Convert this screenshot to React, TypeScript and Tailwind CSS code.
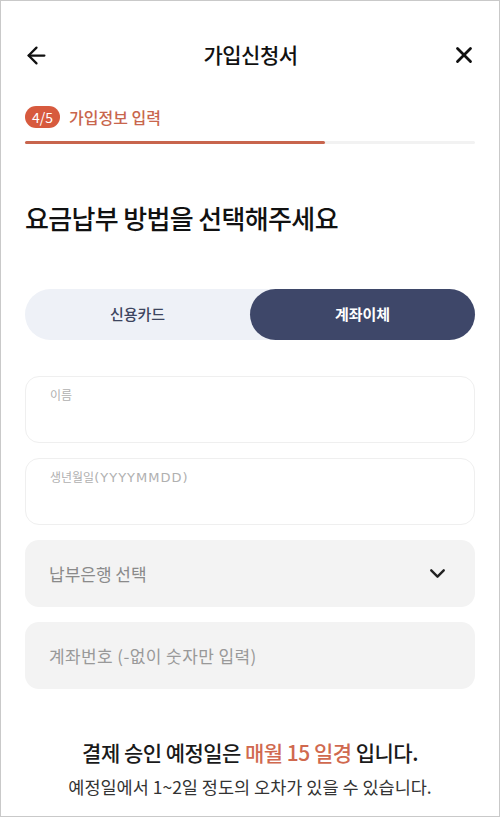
import { ArrowLeft, X, ChevronDown } from "lucide-react"

export default function App() {
  const font = { fontFamily: '"Noto Sans CJK KR", "Noto Sans", sans-serif' }

  return (
    <div className="w-[500px] h-[817px] bg-white border border-[#c9c9c9] overflow-hidden" style={font}>
      {/* Header */}
      <div className="flex items-center justify-between h-[40px] mt-[34px] px-[22px]">
        <ArrowLeft className="h-[27px] w-[27px] text-[#111]" strokeWidth={2} />
        <h1 className="text-[21px] font-medium text-[#111] tracking-tight">가입신청서</h1>
        <X className="h-[26px] w-[26px] text-[#111]" strokeWidth={2.6} />
      </div>

      {/* Step */}
      <div className="px-[24px] mt-[30px]">
        <div className="flex items-center gap-[9px]">
          <span className="inline-flex items-center justify-center h-[22px] px-[7px] rounded-full bg-[#d75a3e] text-white text-[14px] leading-none">
            4/5
          </span>
          <span className="text-[16px] font-medium text-[#c8664d]">가입정보 입력</span>
        </div>
        <div className="mt-[12px] h-[3px] bg-[#f2f2f2] rounded-full">
          <div className="h-full w-[300px] bg-[#c8654d] rounded-full" />
        </div>
      </div>

      {/* Title */}
      <h2 className="px-[24px] mt-[54px] text-[26px] font-medium text-[#111] tracking-tight">
        요금납부 방법을 선택해주세요
      </h2>

      {/* Toggle */}
      <div className="mx-[24px] mt-[52px] flex h-[51px] rounded-full bg-[#eef1f7]">
        <button className="flex-1 text-[15px] font-medium text-[#3d4560]">신용카드</button>
        <button className="flex-1 rounded-full bg-[#3e4769] text-[15px] font-bold text-white">계좌이체</button>
      </div>

      {/* Fields */}
      <div className="mx-[24px] mt-[36px] flex flex-col gap-[15px]">
        <div className="h-[67px] rounded-[14px] border border-[#efefef] px-[24px] pt-[4px]">
          <span className="text-[12px] text-[#b0b0b0]">이름</span>
        </div>
        <div className="h-[67px] rounded-[14px] border border-[#efefef] px-[24px] pt-[4px]">
          <span className="text-[12px] text-[#b0b0b0]">
            생년월일
            <span className="text-[13px] tracking-[1px]" style={{ fontFamily: '"DejaVu Sans", sans-serif' }}>
              (YYYYMMDD)
            </span>
          </span>
        </div>
        <div className="h-[67px] rounded-[14px] bg-[#f3f3f3] pl-[24px] pr-[25px] flex items-center justify-between">
          <span className="text-[17px] text-[#8a8a8a]">납부은행 선택</span>
          <ChevronDown className="h-[25px] w-[25px] text-[#222]" strokeWidth={2.3} />
        </div>
        <div className="h-[67px] rounded-[14px] bg-[#f3f3f3] px-[24px] flex items-center">
          <span className="text-[17px] text-[#999] tracking-[0.4px]">계좌번호 (-없이 숫자만 입력)</span>
        </div>
      </div>

      {/* Notice */}
      <div className="mt-[48px] text-center">
        <p className="text-[21px] font-medium text-[#1a1a1a] tracking-tight">
          결제 승인 예정일은 <span className="text-[#d0694f]">매월 15 일경</span> 입니다.
        </p>
        <p className="mt-[5px] text-[17.5px] text-[#333]">예정일에서 1~2일 정도의 오차가 있을 수 있습니다.</p>
      </div>
    </div>
  )
}
